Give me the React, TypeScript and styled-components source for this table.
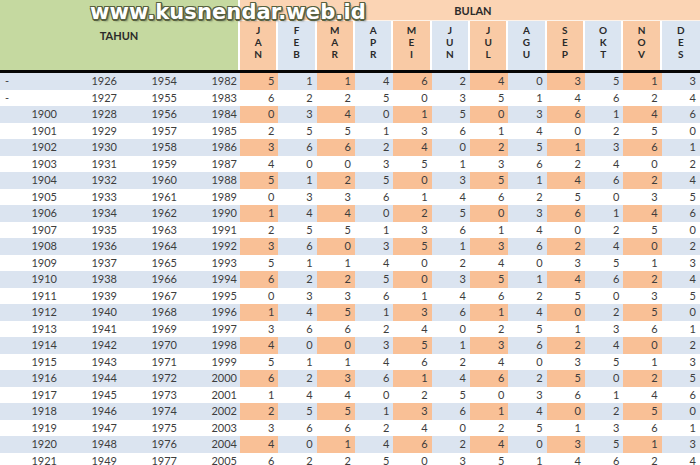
import React, { FC } from 'react';
import styled, { createGlobalStyle } from 'styled-components';

const GlobalStyle = createGlobalStyle`
  html, body {
    margin: 0;
    padding: 0;
    background: #ffffff;
  }
  body {
    font-family: Lato, 'Open Sans', sans-serif;
  }
`;

const columns = '60px 60px 60px 60px repeat(12, 1fr)';

const StyledSheet = styled.div`
  position: relative;
  width: 700px;
  height: 465px;
  overflow: hidden;
  background: #ffffff;
  color: #3d3d3d;
`;

const StyledHeader = styled.div`
  display: grid;
  grid-template-columns: ${columns};
  grid-template-rows: 21px 49px;
  border-bottom: 3px solid #050505;
`;

const StyledYearHead = styled.div`
  grid-column: 1 / 5;
  grid-row: 1 / 3;
  background: #c5d9a0;
  border-right: 2px solid #ffffff;
  display: flex;
  align-items: center;
  justify-content: center;
  font-weight: bold;
  font-size: 11px;
  color: #2a2a2a;
`;

const StyledMonthBand = styled.div`
  grid-column: 5 / -1;
  grid-row: 1;
  background: #fbd4b4;
  border-bottom: 1px solid #fdf3ea;
  display: flex;
  align-items: center;
  justify-content: center;
  font-weight: bold;
  font-size: 11px;
  color: #2a2a2a;
  padding-left: 6px;
`;

const StyledMonthHead = styled.div<{ $tone: 'orange' | 'blue' }>`
  grid-row: 2;
  background: ${(p) => (p.$tone === 'orange' ? '#f9caa5' : '#dbe5f1')};
  border-right: 2px solid #ffffff;
  display: flex;
  flex-direction: column;
  align-items: center;
  padding-top: 3px;
  font-weight: bold;
  font-size: 10px;
  line-height: 12px;
  color: #2a2a2a;
  &:last-child {
    border-right: none;
  }
`;

const StyledLetter = styled.span`
  display: block;
  height: 12px;
`;

const StyledRow = styled.div<{ $striped: boolean }>`
  display: grid;
  grid-template-columns: ${columns};
  height: 16.5px;
  line-height: 16.5px;
  font-size: 11px;
  background: ${(p) => (p.$striped ? '#dbe4f0' : '#ffffff')};
`;

const StyledYearCell = styled.div<{ $dash?: boolean }>`
  text-align: ${(p) => (p.$dash ? 'left' : 'right')};
  padding: ${(p) => (p.$dash ? '0 0 0 5px' : '0 3px 0 0')};
`;

const StyledValueCell = styled.div<{ $orange: boolean }>`
  text-align: right;
  padding-right: 4px;
  background: ${(p) => (p.$orange ? '#f9c096' : 'transparent')};
`;

const StyledWatermark = styled.div`
  position: absolute;
  left: 90px;
  top: 1px;
  font-family: 'DejaVu Sans', Verdana, sans-serif;
  font-weight: bold;
  font-size: 21px;
  line-height: 22px;
  color: #ffffff;
  letter-spacing: 0.1px;
  text-shadow:
    -1px -1px 0 #56603f,
    1px -1px 0 #56603f,
    -1px 1px 0 #56603f,
    1px 1px 0 #56603f,
    0 1.5px 0 #56603f,
    1.5px 0 0 #56603f,
    2px 2px 2px rgba(40, 40, 30, 0.6);
  pointer-events: none;
`;

const months = ['JAN', 'FEB', 'MAR', 'APR', 'MEI', 'JUN', 'JUL', 'AGU', 'SEP', 'OKT', 'NOV', 'DES'];

interface RowData {
  years: string[];
  values: number[];
}

const rows: RowData[] = [
  { years: ['-', '1926', '1954', '1982'], values: [5, 1, 1, 4, 6, 2, 4, 0, 3, 5, 1, 3] },
  { years: ['-', '1927', '1955', '1983'], values: [6, 2, 2, 5, 0, 3, 5, 1, 4, 6, 2, 4] },
  { years: ['1900', '1928', '1956', '1984'], values: [0, 3, 4, 0, 1, 5, 0, 3, 6, 1, 4, 6] },
  { years: ['1901', '1929', '1957', '1985'], values: [2, 5, 5, 1, 3, 6, 1, 4, 0, 2, 5, 0] },
  { years: ['1902', '1930', '1958', '1986'], values: [3, 6, 6, 2, 4, 0, 2, 5, 1, 3, 6, 1] },
  { years: ['1903', '1931', '1959', '1987'], values: [4, 0, 0, 3, 5, 1, 3, 6, 2, 4, 0, 2] },
  { years: ['1904', '1932', '1960', '1988'], values: [5, 1, 2, 5, 0, 3, 5, 1, 4, 6, 2, 4] },
  { years: ['1905', '1933', '1961', '1989'], values: [0, 3, 3, 6, 1, 4, 6, 2, 5, 0, 3, 5] },
  { years: ['1906', '1934', '1962', '1990'], values: [1, 4, 4, 0, 2, 5, 0, 3, 6, 1, 4, 6] },
  { years: ['1907', '1935', '1963', '1991'], values: [2, 5, 5, 1, 3, 6, 1, 4, 0, 2, 5, 0] },
  { years: ['1908', '1936', '1964', '1992'], values: [3, 6, 0, 3, 5, 1, 3, 6, 2, 4, 0, 2] },
  { years: ['1909', '1937', '1965', '1993'], values: [5, 1, 1, 4, 0, 2, 4, 0, 3, 5, 1, 3] },
  { years: ['1910', '1938', '1966', '1994'], values: [6, 2, 2, 5, 0, 3, 5, 1, 4, 6, 2, 4] },
  { years: ['1911', '1939', '1967', '1995'], values: [0, 3, 3, 6, 1, 4, 6, 2, 5, 0, 3, 5] },
  { years: ['1912', '1940', '1968', '1996'], values: [1, 4, 5, 1, 3, 6, 1, 4, 0, 2, 5, 0] },
  { years: ['1913', '1941', '1969', '1997'], values: [3, 6, 6, 2, 4, 0, 2, 5, 1, 3, 6, 1] },
  { years: ['1914', '1942', '1970', '1998'], values: [4, 0, 0, 3, 5, 1, 3, 6, 2, 4, 0, 2] },
  { years: ['1915', '1943', '1971', '1999'], values: [5, 1, 1, 4, 6, 2, 4, 0, 3, 5, 1, 3] },
  { years: ['1916', '1944', '1972', '2000'], values: [6, 2, 3, 6, 1, 4, 6, 2, 5, 0, 2, 5] },
  { years: ['1917', '1945', '1973', '2001'], values: [1, 4, 4, 0, 2, 5, 0, 3, 6, 1, 4, 6] },
  { years: ['1918', '1946', '1974', '2002'], values: [2, 5, 5, 1, 3, 6, 1, 4, 0, 2, 5, 0] },
  { years: ['1919', '1947', '1975', '2003'], values: [3, 6, 6, 2, 4, 0, 2, 5, 1, 3, 6, 1] },
  { years: ['1920', '1948', '1976', '2004'], values: [4, 0, 1, 4, 6, 2, 4, 0, 3, 5, 1, 3] },
  { years: ['1921', '1949', '1977', '2005'], values: [6, 2, 2, 5, 0, 3, 5, 1, 4, 6, 2, 4] },
];

const App: FC = () => {
  return (
    <>
      <GlobalStyle />
      <StyledSheet>
        <StyledHeader>
          <StyledYearHead>TAHUN</StyledYearHead>
          <StyledMonthBand>BULAN</StyledMonthBand>
          {months.map((m, i) => (
            <StyledMonthHead key={m} $tone={i % 2 === 0 ? 'orange' : 'blue'}>
              {m.split('').map((ch, j) => (
                <StyledLetter key={j}>{ch}</StyledLetter>
              ))}
            </StyledMonthHead>
          ))}
        </StyledHeader>
        {rows.map((row, r) => {
          const striped = r % 2 === 0;
          return (
            <StyledRow key={r} $striped={striped}>
              {row.years.map((y, k) => (
                <StyledYearCell key={k} $dash={y === '-'}>
                  {y}
                </StyledYearCell>
              ))}
              {row.values.map((v, k) => (
                <StyledValueCell key={k} $orange={striped && k % 2 === 0}>
                  {v}
                </StyledValueCell>
              ))}
            </StyledRow>
          );
        })}
        <StyledWatermark>www.kusnendar.web.id</StyledWatermark>
      </StyledSheet>
    </>
  );
};

export default App;
